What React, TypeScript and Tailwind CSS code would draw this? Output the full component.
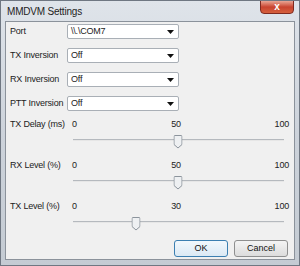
import React from "react";

const FONT = { fontFamily: '"Liberation Sans", Arial, sans-serif' };

function Combo({ value }: { value: string }) {
  return (
    <div className="flex h-[15px] w-[112px] items-center justify-between rounded-[2px] border border-[#a9afb6] bg-white pl-[3px] pr-[4px] text-[9px] tracking-[-0.2px] text-[#222]">
      <span className="leading-none">{value}</span>
      <svg width="7" height="4" viewBox="0 0 7 4">
        <path d="M0 0h7L3.5 4z" fill="#111" />
      </svg>
    </div>
  );
}

function Thumb() {
  return (
    <svg width="9" height="14" viewBox="0 0 9 14">
      <path
        d="M0.5 1.5a1 1 0 0 1 1-1h6a1 1 0 0 1 1 1v8l-4 3.5l-4-3.5z"
        fill="#eef0f2"
        stroke="#8c949c"
      />
    </svg>
  );
}

function Slider({ label, value }: { label: string; value: number }) {
  return (
    <div className="flex flex-col">
      <div className="flex h-[12px] items-center text-[9px] leading-none tracking-[-0.2px] text-[#222]">
        <span className="w-[63px] whitespace-nowrap pl-[4px]">{label}</span>
        <div className="relative h-full flex-1">
          <span className="absolute left-[3px] top-[2px]">0</span>
          <span className="absolute left-[107px] top-[2px] -translate-x-1/2">{value}</span>
          <span className="absolute right-[5px] top-[2px]">100</span>
        </div>
      </div>
      <div className="relative ml-[67px] mr-[10px] mt-[5px] h-[15px]">
        <div className="absolute left-0 right-0 top-[4px] h-[2px] border-t border-[#b5b9be] bg-[#e6e6e6]" />
        <div
          className="absolute top-0 -translate-x-1/2"
          style={{ left: `${(value / 100) * 210}px` }}
        >
          <Thumb />
        </div>
      </div>
    </div>
  );
}

export default function App() {
  const rows = [
    { label: "Port", value: "\\\\.\\COM7" },
    { label: "TX Inversion", value: "Off" },
    { label: "RX Inversion", value: "Off" },
    { label: "PTT Inversion", value: "Off" },
  ];

  return (
    <div
      className="flex h-[266px] w-[300px] flex-col overflow-hidden border border-[#6f7782] bg-gradient-to-b from-[#dfe4ea] via-[#cdd3db] to-[#c4cbd3]"
      style={FONT}
    >
      <div className="relative flex h-[20px] shrink-0 items-center pl-[6px] text-[10px] tracking-[-0.2px] text-[#1e1e1e]">
        MMDVM Settings
        <div className="absolute right-[5px] top-[-1px] flex h-[14px] w-[34px] items-center justify-center rounded-b-[4px] border border-[#7e2a20] bg-gradient-to-b from-[#e8a594] via-[#c8432f] to-[#d5603d]">
          <span className="text-[10px] font-bold leading-none text-white">x</span>
        </div>
      </div>

      <div className="mx-[4px] flex h-[239px] shrink-0 flex-col border border-[#8b929b] bg-[#f0f0f0] pt-[2px]">
        <div className="flex flex-col gap-[9px]">
          {rows.map((r) => (
            <div key={r.label} className="flex items-center">
              <span className="w-[61px] whitespace-nowrap pl-[4px] text-[9px] tracking-[-0.2px] text-[#222]">
                {r.label}
              </span>
              <Combo value={r.value} />
            </div>
          ))}
        </div>

        <div className="mt-[7px] flex flex-col gap-[9px]">
          <Slider label="TX Delay (ms)" value={50} />
          <Slider label="RX Level (%)" value={50} />
          <Slider label="TX Level (%)" value={30} />
        </div>

        <div className="mt-auto mb-[2px] flex justify-end gap-[6px] pr-[6px]">
          <button className="h-[17px] w-[54px] rounded-[3px] border border-[#3c7fb1] bg-gradient-to-b from-[#f2f8fd] to-[#dbe9f4] text-[9px] leading-none text-[#111]">
            OK
          </button>
          <button className="h-[17px] w-[54px] rounded-[3px] border border-[#8e8f8f] bg-gradient-to-b from-[#f4f4f4] to-[#dcdcdc] text-[9px] leading-none text-[#111]">
            Cancel
          </button>
        </div>
      </div>
    </div>
  );
}
